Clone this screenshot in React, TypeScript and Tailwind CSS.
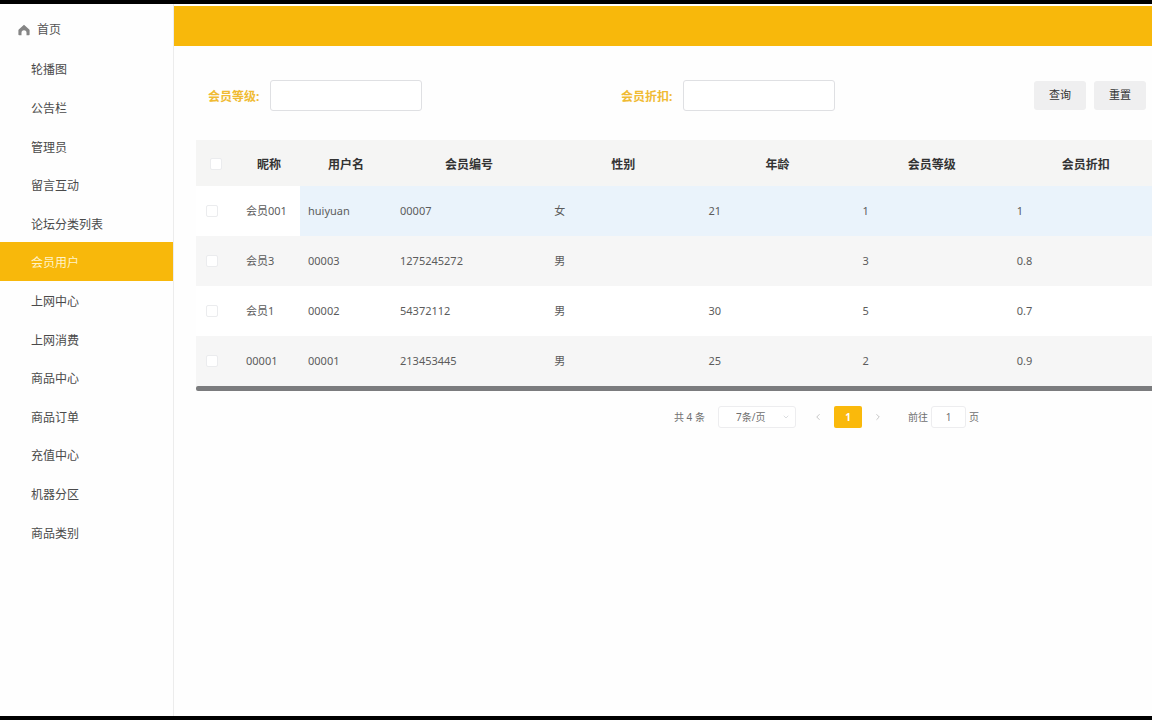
import { useState } from 'react';
import { FiChevronDown, FiChevronLeft, FiChevronRight } from 'react-icons/fi';

type Member = {
  nickname: string;
  username: string;
  memberNo: string;
  gender: string;
  age: string;
  level: string;
  discount: string;
};

const menuItems = [
  '轮播图',
  '公告栏',
  '管理员',
  '留言互动',
  '论坛分类列表',
  '会员用户',
  '上网中心',
  '上网消费',
  '商品中心',
  '商品订单',
  '充值中心',
  '机器分区',
  '商品类别',
];

const members: Member[] = [
  { nickname: '会员001', username: 'huiyuan', memberNo: '00007', gender: '女', age: '21', level: '1', discount: '1' },
  { nickname: '会员3', username: '00003', memberNo: '1275245272', gender: '男', age: '', level: '3', discount: '0.8' },
  { nickname: '会员1', username: '00002', memberNo: '54372112', gender: '男', age: '30', level: '5', discount: '0.7' },
  { nickname: '00001', username: '00001', memberNo: '213453445', gender: '男', age: '25', level: '2', discount: '0.9' },
];

const columns = ['昵称', '用户名', '会员编号', '性别', '年龄', '会员等级', '会员折扣'];

const checkboxClass = 'block size-3 appearance-none rounded-xs border border-[#ebecee] bg-white checked:bg-[#fab90b]';

const HomeIcon = () => (
  <svg viewBox="0 0 24 24" className="size-3 text-[#858585]" fill="currentColor" aria-hidden="true">
    <path d="M12 1.500 22.500 11c.5.500.700 1 .700 1.700V21c0 .900-.500 1.500-1.400 1.500H17V17.500a5 5 0 0 0-10 0v5H2.200c-.900 0-1.400-.600-1.400-1.500v-8.300c0-.700.200-1.200.700-1.700z" />
  </svg>
);

const Sidebar = () => (
  <aside className="w-[174px] shrink-0 border-r border-[#ececec]">
    <a href="#home" className="flex h-[45px] items-center gap-[7px] pt-[6px] pl-[18px] text-xs text-[#555]">
      <HomeIcon />
      首页
    </a>
    <nav className="flex h-[502px] flex-col">
      {menuItems.map((item) => (
        <a
          key={item}
          href="#menu"
          className={`flex flex-1 items-center pt-1 pl-[31px] text-xs ${item === '会员用户' ? 'bg-[#f8b80b] text-[#fff3c9]' : 'text-[#4a4a4a]'}`}
        >
          {item}
        </a>
      ))}
    </nav>
  </aside>
);

const SearchField = ({ id, label }: { id: string; label: string }) => (
  <div className="flex items-center gap-2">
    <label htmlFor={id} className="w-[54px] pt-[2px] text-xs font-bold whitespace-nowrap text-[#f0bb33]">{label}</label>
    <input id={id} type="text" className="h-[31px] w-[152px] rounded-[3px] border border-[#dfe0e3] bg-white px-3 text-xs outline-none" />
  </div>
);

const MemberTable = () => (
  <div className="overflow-x-hidden">
    <table className="w-[967px] min-w-full table-fixed border-collapse text-left">
      <colgroup>
        <col className="w-[42px]" />
        <col className="w-[62px]" />
        <col className="w-[92px]" />
        <col />
        <col />
        <col />
        <col />
        <col />
      </colgroup>
      <thead>
        <tr className="h-[46px] bg-[#f5f5f4]">
          <th className="pt-[2px] pl-[14px]">
            <input type="checkbox" aria-label="全选" className={checkboxClass} />
          </th>
          {columns.map((column) => (
            <th key={column} className="pt-1 text-center text-xs font-bold text-[#333]">{column}</th>
          ))}
        </tr>
      </thead>
      <tbody className="text-[11px] text-[#5c5c5c]">
        {members.map((member, index) => {
          // the first row is in its hover state, its fixed columns stay white
          const stripe = index % 2 === 1 ? 'bg-[#f6f6f6]' : 'bg-white';
          const cell = index === 0 ? 'bg-[#eaf3fb]' : stripe;
          return (
            <tr key={member.memberNo} className="h-[50px]">
              <td className={`pl-[10px] ${stripe}`}>
                <input type="checkbox" aria-label={member.nickname} className={checkboxClass} />
              </td>
              <td className={`pl-2 whitespace-nowrap ${stripe}`}>{member.nickname}</td>
              <td className={`pl-2 ${cell}`}>{member.username}</td>
              <td className={`pl-2 ${cell}`}>{member.memberNo}</td>
              <td className={`pl-2 ${cell}`}>{member.gender}</td>
              <td className={`pl-2 ${cell}`}>{member.age}</td>
              <td className={`pl-2 ${cell}`}>{member.level}</td>
              <td className={`pl-2 ${cell}`}>{member.discount}</td>
            </tr>
          );
        })}
      </tbody>
    </table>
    <div className="h-[5px] rounded-l-xs bg-[#7b7c7e]" />
  </div>
);

const Pagination = () => {
  const [page, setPage] = useState('1');

  return (
    <div className="mt-[15px] flex h-[22px] items-center pl-[50%] text-[10px] whitespace-nowrap text-[#707070]">
      <span className="w-11">共 4 条</span>
      <div className="relative">
        <select aria-label="每页条数" className="block h-[22px] w-[78px] appearance-none rounded-[3px] border border-[#ededef] bg-white pl-[17px] outline-none">
          <option>7条/页</option>
        </select>
        <FiChevronDown className="pointer-events-none absolute top-[7px] right-[6px] size-2 text-[#c8cbd0]" />
      </div>
      <button aria-label="上一页" className="ml-[17px] text-[#bbb]">
        <FiChevronLeft className="size-[10px]" />
      </button>
      <button className="ml-[11px] h-[22px] w-7 rounded-[2px] bg-[#fab90b] font-bold text-white">1</button>
      <button aria-label="下一页" className="ml-[11px] text-[#bbb]">
        <FiChevronRight className="size-[10px]" />
      </button>
      <label htmlFor="page" className="ml-[25px]">前往</label>
      <input
        id="page"
        type="text"
        value={page}
        onChange={(e) => setPage(e.target.value)}
        className="mx-[3px] h-[22px] w-[35px] rounded-[3px] border border-[#ededef] bg-white text-center outline-none"
      />
      <span>页</span>
    </div>
  );
};

const App = () => {
  return (
    <div className="flex min-h-screen border-y-4 border-black bg-[#fefefe] font-['Noto_Sans','Noto_Sans_CJK_SC',sans-serif]">
      <Sidebar />
      <main className="min-w-0 flex-1 pt-[2px]">
        <header className="h-10 bg-[#f8b80b]" />
        <section className="pt-[34px] pl-[22px]">
          <form className="mb-[29px] flex items-center justify-between pr-[6px] pl-3" onSubmit={(e) => e.preventDefault()}>
            <SearchField id="level" label="会员等级:" />
            <SearchField id="discount" label="会员折扣:" />
            <div className="flex gap-2">
              <button type="submit" className="h-[29px] w-[52px] rounded-[3px] bg-[#efeff0] text-[11px] text-[#333]">查询</button>
              <button type="reset" className="h-[29px] w-[52px] rounded-[3px] bg-[#efeff0] text-[11px] text-[#333]">重置</button>
            </div>
          </form>
          <MemberTable />
          <Pagination />
        </section>
      </main>
    </div>
  );
};

export default App;
